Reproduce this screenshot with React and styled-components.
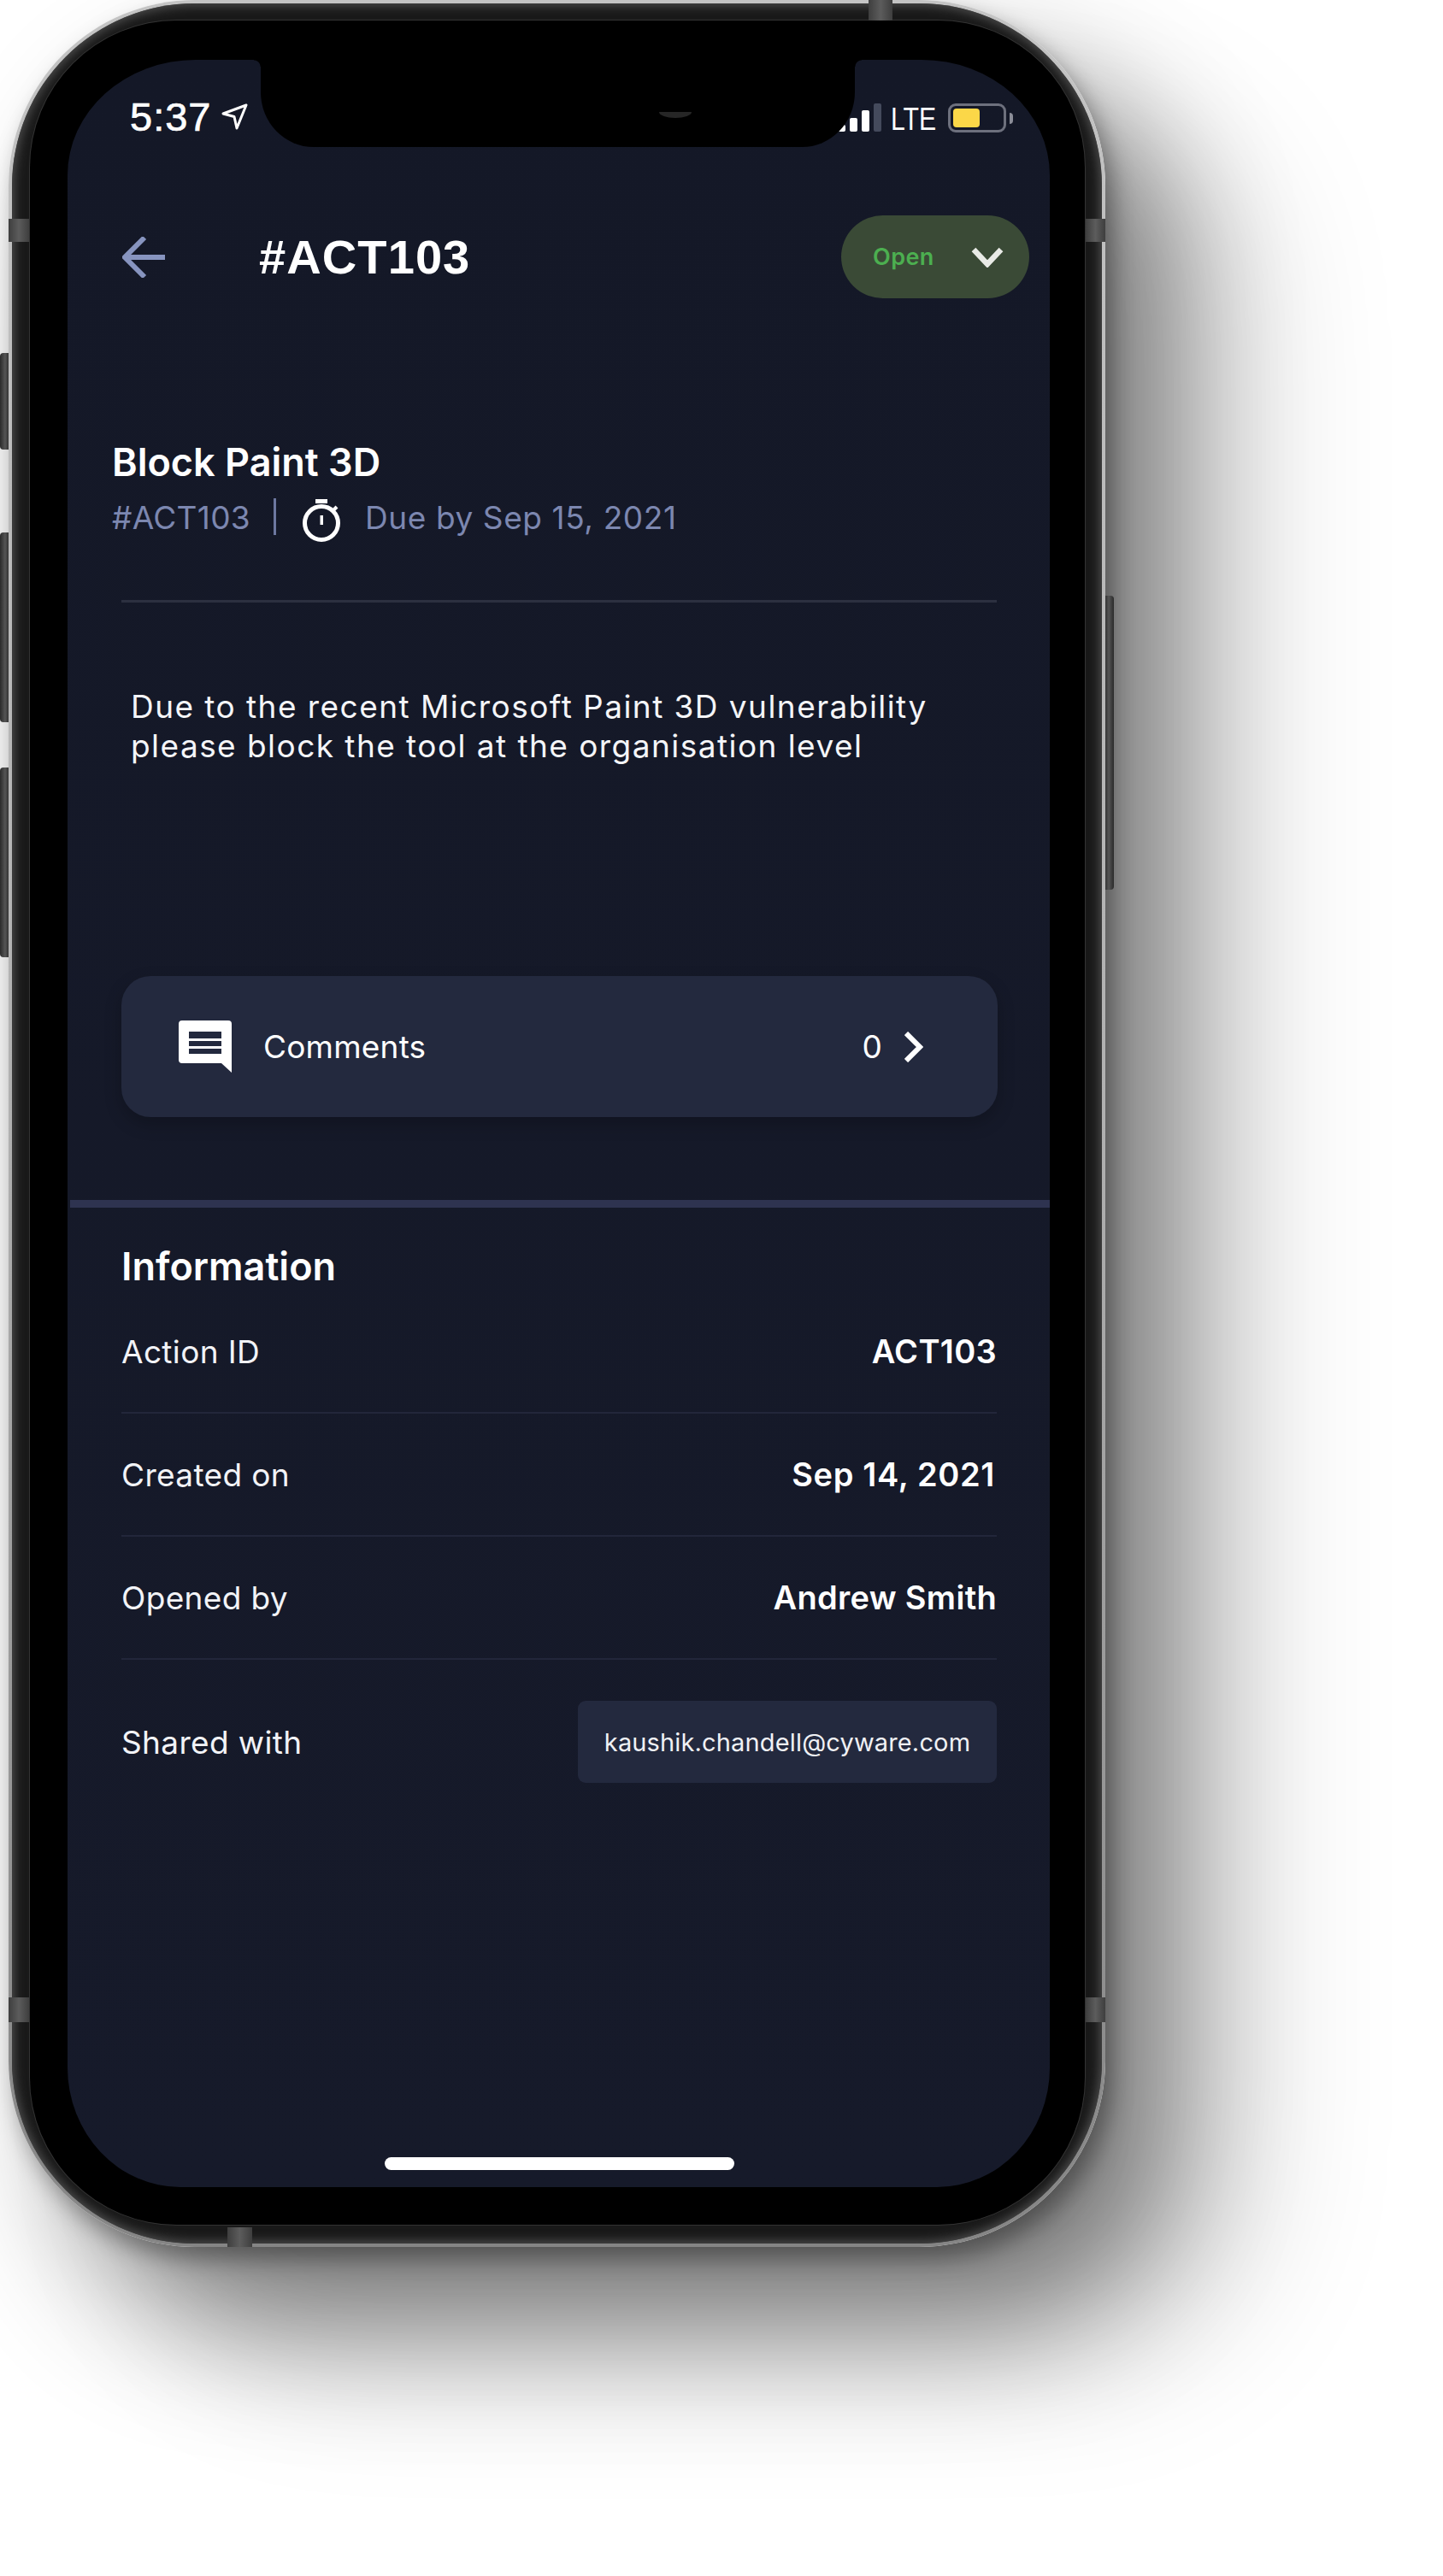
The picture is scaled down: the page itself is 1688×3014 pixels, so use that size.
import React from 'react';
import styled, { createGlobalStyle } from 'styled-components';

const Global = createGlobalStyle`
  html, body { margin: 0; padding: 0; background: #fff; }
  body { width: 1688px; height: 3014px; overflow: hidden; font-family: Inter, "Liberation Sans", sans-serif; }
`;
const Stage = styled.div`
  width: 1688px; height: 3014px; padding-left: 10px; box-sizing: border-box; overflow: hidden;
`;
const Phone = styled.div`
  position: relative; width: 1283px; height: 2629px; box-sizing: border-box; padding: 4px;
  border-radius: 218px;
  background: linear-gradient(180deg, #c4c4c4 0%, #b0b0b0 50%, #858585 100%);
  box-shadow: 8px 14px 26px rgba(0,0,0,.35), 70px 90px 150px rgba(0,0,0,.45), 170px 130px 170px rgba(0,0,0,.17);
`;
const SideKey = styled.div`
  position: absolute; top: ${p => p.$top}px; height: ${p => p.$h}px; width: 10px;
  ${p => p.$right ? 'left: 1283px; border-radius: 0 4px 4px 0;' : 'left: -10px; border-radius: 4px 0 0 4px;'}
  background: linear-gradient(${p => p.$right ? '270deg' : '90deg'}, #2a2a2a, #555 60%, #333);
`;
const Band = styled.div`
  position: absolute; z-index: 2; background: linear-gradient(90deg, #3e3e3e, #5c5c5c, #3e3e3e);
  ${p => p.$h ? `left: ${p.$x}px; top: ${p.$y}px; width: ${p.$w}px; height: ${p.$h}px;` : ''}
`;
const Bezel = styled.div`
  width: 100%; height: 100%; box-sizing: border-box; padding: 20px 20px 22px 21px;
  border-radius: 214px; background: #191919;
  box-shadow: inset 0 0 12px 3px #4d4d4d;
`;
const Glass = styled.div`
  width: 100%; height: 100%; box-sizing: border-box; padding: 46px 41px 44px 44px;
  border-radius: 172px; background: #000; box-shadow: 0 0 0 1px #333;
`;
const Screen = styled.div`
  position: relative; width: 100%; height: 100%; display: flex; flex-direction: column;
  overflow: hidden; background: linear-gradient(180deg, #141827, #161a2a);
  border-radius: 150px 150px 132px 132px / 135px 135px 140px 140px; color: #fff;
`;
const Notch = styled.div`
  position: absolute; z-index: 3; top: 0; left: 226px; width: 695px; height: 102px;
  background: #000; border-radius: 0 0 62px 62px / 0 0 64px 64px;
  &::before, &::after { content: ''; position: absolute; top: 0; width: 8px; height: 8px; }
  &::before { left: -8px; background: radial-gradient(circle at 0 100%, transparent 7px, #000 8px); }
  &::after { right: -8px; background: radial-gradient(circle at 100% 100%, transparent 7px, #000 8px); }
`;
const Camera = styled.div`
  position: absolute; left: 466px; top: 61px; width: 38px; height: 7px; background: #262626;
  border-radius: 0 0 19px 19px / 0 0 7px 7px;
`;
const StatusBar = styled.div`
  height: 102px; box-sizing: border-box; padding: 32px 51px 0 73px; display: flex; align-items: center; flex-shrink: 0;
`;
const Time = styled.span`
  font-family: "Liberation Sans", sans-serif; font-size: 47px; font-weight: 400; letter-spacing: 1px; line-height: 70px;
  -webkit-text-stroke: .7px #fff;
`;
const Locate = styled.svg`width: 31px; height: 31px; margin-left: 12px; margin-top: -1px;`;
const StatusRight = styled.div`margin-left: auto; display: flex; align-items: flex-end; height: 35px;`;
const Signal = styled.div`display: flex; align-items: flex-end; gap: 5px; margin-right: 11px; height: 33px; margin-bottom: 1px;`;
const SigBar = styled.i`
  display: block; width: 9px; height: ${p => p.$h}px; border-radius: 2px; background: ${p => p.$off ? '#444a5c' : '#fff'};
`;
const Lte = styled.span`
  display: inline-block; width: 54px; font-family: "Liberation Sans", sans-serif; font-size: 36px; line-height: 28px;
  margin-bottom: 1px; margin-right: 13px; color: #fff; transform: scaleX(.84); transform-origin: left center; white-space: nowrap;
`;
const Battery = styled.div`
  position: relative; width: 68px; height: 34px; box-sizing: border-box; border: 3px solid #6d707d; border-radius: 9px; padding: 3px;
  &::after { content: ''; position: absolute; left: 69px; top: 8px; width: 4px; height: 13px; border-radius: 0 6px 6px 0; background: #8b8d98; }
`;
const BatteryFill = styled.div`width: 31px; height: 100%; border-radius: 4px; background: #fbd748;`;
const Header = styled.div`
  margin-top: 80px; height: 97px; display: flex; align-items: center; padding: 0 24px 0 64px; flex-shrink: 0;
`;
const BackIcon = styled.svg`width: 50px; height: 48px; flex-shrink: 0;`;
const Title = styled.h1`
  margin: 0 auto 0 110px; font-family: "Liberation Sans", sans-serif; font-size: 56px; font-weight: 700; letter-spacing: 1.1px; line-height: 60px;
`;
const StatusPill = styled.div`
  width: 220px; height: 97px; border-radius: 49px; background: #3a4a36; display: flex; align-items: center; box-sizing: border-box; padding: 0 30px 0 37px;
`;
const PillText = styled.span`font-size: 27px; font-weight: 600; color: #4caf50; letter-spacing: .4px;`;
const PillChevron = styled.svg`width: 38px; height: 24px; margin-left: auto;`;
const TaskBlock = styled.div`margin-top: 168px; padding-left: 52px;`;
const TaskName = styled.h2`margin: 0; font-size: 45px; font-weight: 600; line-height: 48px;`;
const MetaRow = styled.div`
  display: flex; align-items: center; height: 52px; margin-top: 16px; font-size: 37px; color: #7c87b0; letter-spacing: .3px;
`;
const MetaText = styled.span`margin-top: -3px; letter-spacing: ${p => p.$wide ? '.6px' : '.3px'};`;
const MetaSep = styled.i`display: block; width: 3px; height: 43px; margin: 0 30px 6px 27px; background: #6d78a0;`;
const Watch = styled.svg`width: 46px; height: 50px; margin: 3px 28px 0 0;`;
const Rule = styled.div`height: 3px; margin: 69px 62px 0 63px; background: #2c3040; flex-shrink: 0;`;
const Description = styled.p`
  margin: 99px 0 0 74px; font-size: 37px; line-height: 46px; letter-spacing: 1.45px; color: #f4f5f8; white-space: nowrap;
`;
const CommentCard = styled.div`
  margin: 246px 61px 0 63px; height: 165px; flex-shrink: 0; border-radius: 34px; background: #23293e;
  box-shadow: 0 8px 20px rgba(0,0,0,.22); display: flex; align-items: center; padding: 0 87px 0 67px; box-sizing: border-box; font-size: 37px; letter-spacing: .2px;
`;
const CommentIcon = styled.svg`width: 62px; height: 62px; margin-right: 37px;`;
const Count = styled.span`margin-left: auto; margin-right: 26px;`;
const ChevronRight = styled.svg`width: 22px; height: 36px;`;
const ThickRule = styled.div`height: 9px; margin: 97px 0 0 3px; background: #2e3350; flex-shrink: 0;`;
const Info = styled.section`padding: 44px 62px 0 63px;`;
const InfoTitle = styled.h3`margin: 0 0 3px; font-size: 45px; font-weight: 600; line-height: 50px;`;
const InfoRow = styled.div`
  height: ${p => p.$last ? 'auto' : '142px'}; display: flex; align-items: center; justify-content: space-between;
  ${p => p.$last ? 'padding-top: 48px;' : 'border-bottom: 2px solid #22263a;'}
`;
const Label = styled.span`font-size: 37px; color: #f2f3f7; letter-spacing: .35px;`;
const Value = styled.span`
  font-size: 38px; font-weight: 600; letter-spacing: ${p => p.$date ? '.65px' : '.3px'}; margin-right: ${p => p.$date ? '2px' : '0'};
`;
const Chip = styled.span`
  width: 490px; height: 96px; border-radius: 9px; background: #23293e; display: flex; align-items: center; justify-content: center;
  font-size: 29px; letter-spacing: .15px; color: #f0f1f5;
`;
const HomeBar = styled.div`
  margin: auto 0 20px 371px; width: 409px; height: 15px; border-radius: 8px; background: #fff; flex-shrink: 0;
`;

export default function App() {
  return (
    <Stage>
      <Global />
      <Phone>
        <SideKey $top={413} $h={113} />
        <SideKey $top={623} $h={222} />
        <SideKey $top={898} $h={222} />
        <SideKey $right $top={697} $h={344} />
        <Band $x={1006} $y={0} $w={28} $h={24} />
        <Band $x={0} $y={256} $w={24} $h={27} />
        <Band $x={1260} $y={256} $w={23} $h={27} />
        <Band $x={0} $y={2337} $w={24} $h={29} />
        <Band $x={1260} $y={2337} $w={23} $h={29} />
        <Band $x={256} $y={2606} $w={29} $h={23} />
        <Bezel>
          <Glass>
            <Screen>
              <Notch>
                <Camera />
              </Notch>
              <StatusBar>
                <Time>5:37</Time>
                <Locate viewBox="0 0 31 31">
                  <path d="M29 2 L2 12 L15 15.5 L18 29 Z" fill="none" stroke="#fff" strokeWidth="3" strokeLinejoin="round" />
                </Locate>
                <StatusRight>
                  <Signal>
                    <SigBar $h={8} />
                    <SigBar $h={16} />
                    <SigBar $h={25} />
                    <SigBar $h={33} $off />
                  </Signal>
                  <Lte>LTE</Lte>
                  <Battery>
                    <BatteryFill />
                  </Battery>
                </StatusRight>
              </StatusBar>
              <Header>
                <BackIcon viewBox="0 0 50 48">
                  <path d="M50 24 H3 M26 1 L3 24 L26 47" fill="none" stroke="#8794bf" strokeWidth="6" />
                </BackIcon>
                <Title>#ACT103</Title>
                <StatusPill>
                  <PillText>Open</PillText>
                  <PillChevron viewBox="0 0 38 24">
                    <path d="M3 3 L19 20 L35 3" fill="none" stroke="#e8eae6" strokeWidth="6.5" />
                  </PillChevron>
                </StatusPill>
              </Header>
              <TaskBlock>
                <TaskName>Block Paint 3D</TaskName>
                <MetaRow>
                  <MetaText>#ACT103</MetaText>
                  <MetaSep />
                  <Watch viewBox="0 0 46 50">
                    <circle cx="23" cy="28" r="19.5" fill="none" stroke="#fff" strokeWidth="5" />
                    <rect x="16" y="0" width="14" height="5" fill="#fff" />
                    <rect x="21.5" y="19" width="3.5" height="11" fill="#fff" />
                    <path d="M36 14 L41 9" stroke="#fff" strokeWidth="4" />
                  </Watch>
                  <MetaText $wide>Due by Sep 15, 2021</MetaText>
                </MetaRow>
              </TaskBlock>
              <Rule />
              <Description>
                Due to the recent Microsoft Paint 3D vulnerability
                <br />
                please block the tool at the organisation level
              </Description>
              <CommentCard>
                <CommentIcon viewBox="0 0 62 62">
                  <path d="M4 0 H58 A4 4 0 0 1 62 4 V61 L50 50 H4 A4 4 0 0 1 0 46 V4 A4 4 0 0 1 4 0 Z" fill="#fff" />
                  <rect x="12" y="13" width="38" height="8" fill="#23293e" />
                  <rect x="12" y="24" width="38" height="6" fill="#23293e" />
                  <rect x="12" y="33" width="38" height="6" fill="#23293e" />
                </CommentIcon>
                Comments
                <Count>0</Count>
                <ChevronRight viewBox="0 0 22 36">
                  <path d="M2 2 L18 18 L2 34" fill="none" stroke="#fff" strokeWidth="6" />
                </ChevronRight>
              </CommentCard>
              <ThickRule />
              <Info>
                <InfoTitle>Information</InfoTitle>
                <InfoRow>
                  <Label>Action ID</Label>
                  <Value>ACT103</Value>
                </InfoRow>
                <InfoRow>
                  <Label>Created on</Label>
                  <Value $date>Sep 14, 2021</Value>
                </InfoRow>
                <InfoRow>
                  <Label>Opened by</Label>
                  <Value>Andrew Smith</Value>
                </InfoRow>
                <InfoRow $last>
                  <Label>Shared with</Label>
                  <Chip>kaushik.chandell@cyware.com</Chip>
                </InfoRow>
              </Info>
              <HomeBar />
            </Screen>
          </Glass>
        </Bezel>
      </Phone>
    </Stage>
  );
}
